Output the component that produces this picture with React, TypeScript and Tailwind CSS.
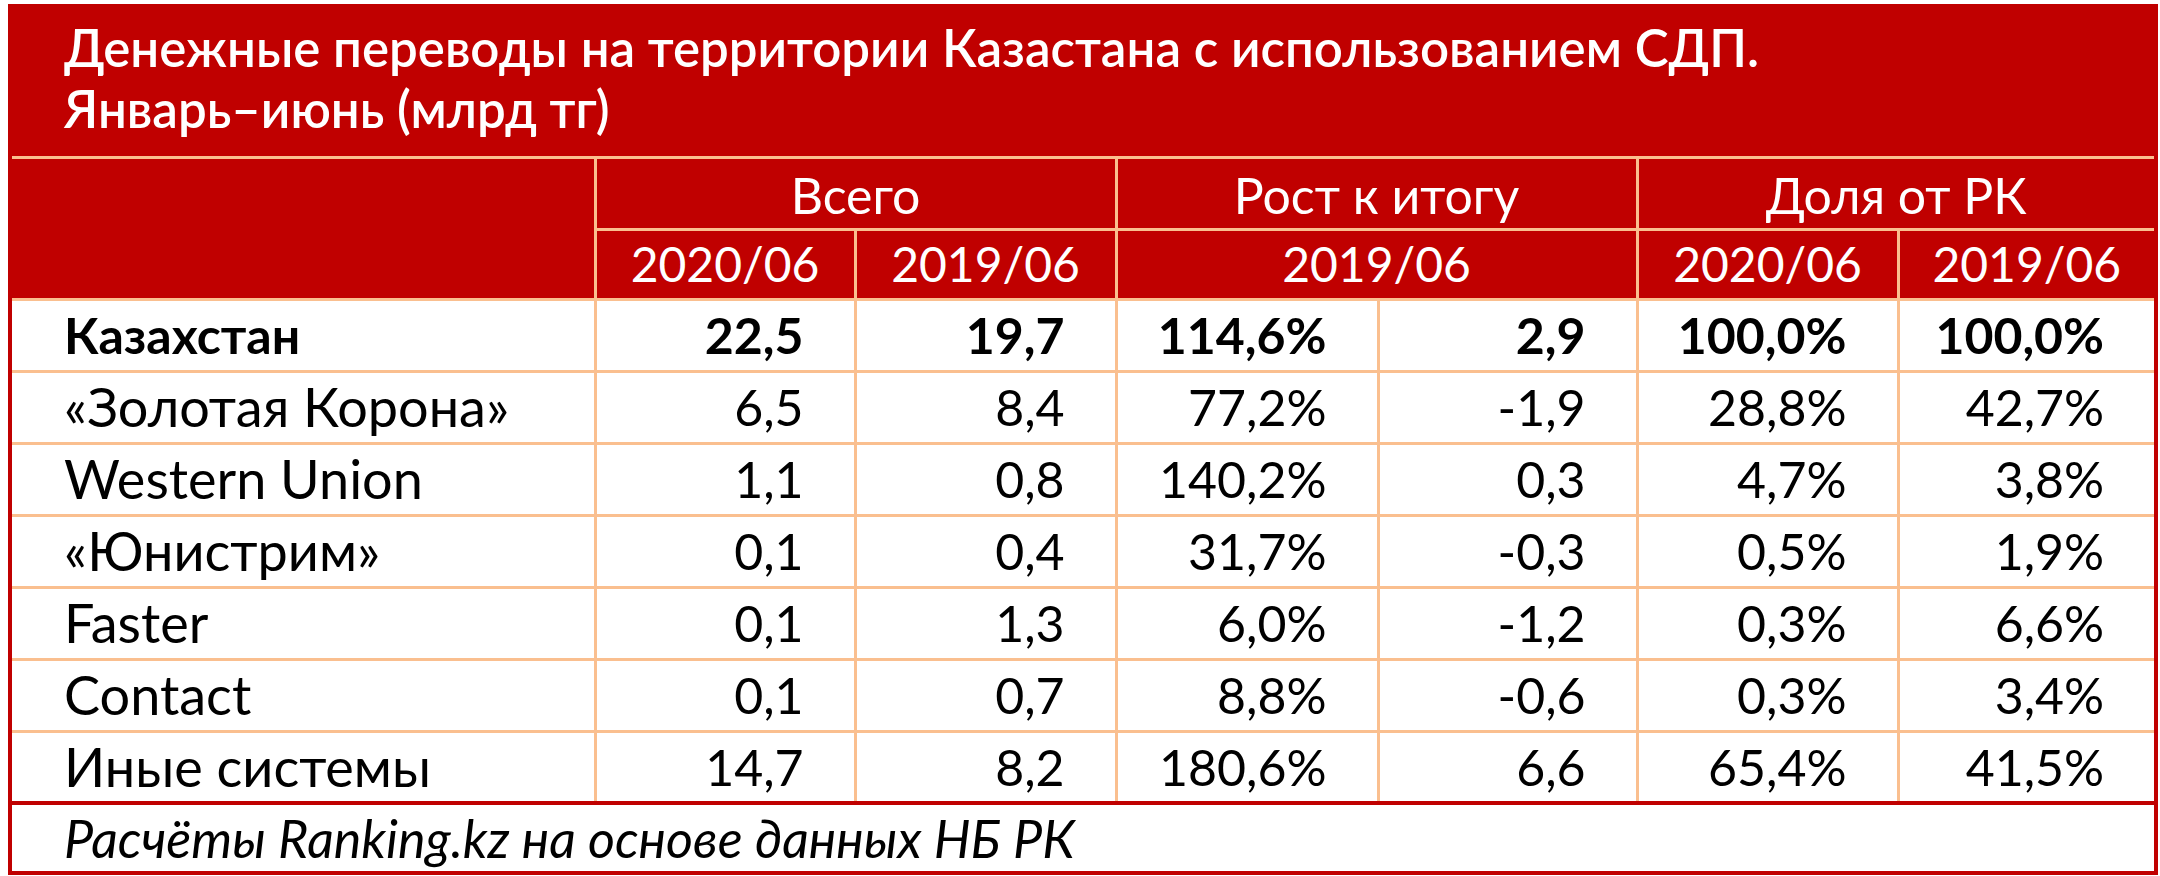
const rows = [
  { name: 'Казахстан', v: ['22,5', '19,7', '114,6%', '2,9', '100,0%', '100,0%'], bold: true },
  { name: '«Золотая Корона»', v: ['6,5', '8,4', '77,2%', '-1,9', '28,8%', '42,7%'] },
  { name: 'Western Union', v: ['1,1', '0,8', '140,2%', '0,3', '4,7%', '3,8%'] },
  { name: '«Юнистрим»', v: ['0,1', '0,4', '31,7%', '-0,3', '0,5%', '1,9%'] },
  { name: 'Faster', v: ['0,1', '1,3', '6,0%', '-1,2', '0,3%', '6,6%'] },
  { name: 'Contact', v: ['0,1', '0,7', '8,8%', '-0,6', '0,3%', '3,4%'] },
  { name: 'Иные системы', v: ['14,7', '8,2', '180,6%', '6,6', '65,4%', '41,5%'] },
];

const colWidths = [585, 260, 261, 262, 259, 261, 258];

export default function App() {
  return (
    <div className="bg-white w-[2160px] h-[876px] overflow-hidden pt-[4px] pl-[8px] font-['Lato','Noto_Sans',sans-serif]">
      <table className="border-collapse table-fixed w-[2150px] border-4 border-[#c00000] text-black leading-[60px]">
        <colgroup>
          {colWidths.map((w, i) => (
            <col key={i} style={{ width: w }} />
          ))}
        </colgroup>
        <thead>
          <tr>
            <th
              colSpan={7}
              className="h-[151px] bg-[#c00000] border-b-[3px] border-[#fabf8f] text-left align-top pl-[52px] pt-[9px] text-[51px] font-semibold text-white leading-[61px]"
            >
              Денежные переводы на территории Казастана с использованием СДП.
              <br />
              Январь–июнь (млрд тг)
            </th>
          </tr>
          <tr className="bg-[#c00000] text-white text-[50px] font-normal">
            <th rowSpan={2} className="border-[3px] border-[#fabf8f]" />
            <th colSpan={2} className="h-[72px] pt-[4px] border-[3px] border-[#fabf8f] font-normal text-center">
              Всего
            </th>
            <th colSpan={2} className="pt-[4px] border-[3px] border-[#fabf8f] font-normal text-center">
              Рост к итогу
            </th>
            <th colSpan={2} className="pt-[4px] border-[3px] border-[#fabf8f] font-normal text-center">
              Доля от РК
            </th>
          </tr>
          <tr className="bg-[#c00000] text-white text-[48px]">
            <th className="h-[70px] border-[3px] border-[#fabf8f] font-normal text-center">2020/06</th>
            <th className="border-[3px] border-[#fabf8f] font-normal text-center">2019/06</th>
            <th colSpan={2} className="border-[3px] border-[#fabf8f] font-normal text-center">
              2019/06
            </th>
            <th className="border-[3px] border-[#fabf8f] font-normal text-center">2020/06</th>
            <th className="border-[3px] border-[#fabf8f] font-normal text-center">2019/06</th>
          </tr>
        </thead>
        <tbody>
          {rows.map((r) => (
            <tr key={r.name} className={r.bold ? 'font-bold' : 'font-normal'}>
              <td
                className={`h-[72px] border-[3px] border-[#fabf8f] pl-[52px] text-left whitespace-nowrap ${
                  r.bold ? 'text-[50px]' : 'text-[54px]'
                }`}
              >
                {r.name}
              </td>
              {r.v.map((val, i) => (
                <td
                  key={i}
                  className="border-[3px] border-[#fabf8f] pr-[50px] text-right text-[50px] whitespace-nowrap"
                >
                  {val}
                </td>
              ))}
            </tr>
          ))}
          <tr>
            <td
              colSpan={7}
              className="h-[70px] border-t-4 border-[#c00000] pl-[52px] italic text-left text-[52px]"
            >
              Расчёты Ranking.kz на основе данных НБ РК
            </td>
          </tr>
        </tbody>
      </table>
    </div>
  );
}
